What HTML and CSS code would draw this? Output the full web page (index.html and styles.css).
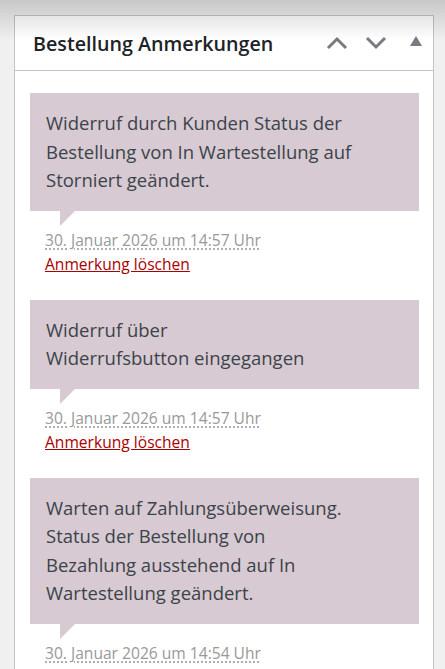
FILE: index.html
```html
<!DOCTYPE html>
<html lang="de">
<head>
    <meta charset="UTF-8">
    <meta name="viewport" content="width=device-width, initial-scale=1.0">
    <title>Bestellung Anmerkungen</title>
    <link rel="stylesheet" href="styles.css">
</head>
<body>
    <div class="top-shadow"></div>

    <div class="postbox">
        <div class="postbox-header">
            <h2>Bestellung Anmerkungen</h2>
            <div class="handle-actions">
                <button class="handle-btn" aria-label="Nach oben">
                    <svg width="22" height="14" viewBox="0 0 22 14"><polyline points="2,12 11,3 20,12" fill="none" stroke="#787c82" stroke-width="3"/></svg>
                </button>
                <button class="handle-btn" aria-label="Nach unten">
                    <svg width="22" height="14" viewBox="0 0 22 14"><polyline points="2,2 11,11 20,2" fill="none" stroke="#787c82" stroke-width="3"/></svg>
                </button>
                <button class="handle-btn toggle" aria-label="Umschalten">
                    <svg width="12" height="10" viewBox="0 0 12 10"><polygon points="0,10 6,0 12,10" fill="#787c82"/></svg>
                </button>
            </div>
        </div>

        <div class="inside">
            <ul class="order-notes">
                <li class="note">
                    <div class="note-content">
                        <p>Widerruf durch Kunden Status der Bestellung von In Wartestellung auf Storniert geändert.</p>
                    </div>
                    <p class="meta">
                        <abbr class="exact-date" title="30.01.2026 14:57">30. Januar 2026 um 14:57 Uhr</abbr><br>
                        <a href="#" class="delete-note">Anmerkung löschen</a>
                    </p>
                </li>
                <li class="note">
                    <div class="note-content">
                        <p>Widerruf über<br>Widerrufsbutton eingegangen</p>
                    </div>
                    <p class="meta">
                        <abbr class="exact-date" title="30.01.2026 14:57">30. Januar 2026 um 14:57 Uhr</abbr><br>
                        <a href="#" class="delete-note">Anmerkung löschen</a>
                    </p>
                </li>
                <li class="note">
                    <div class="note-content">
                        <p>Warten auf Zahlungsüberweisung.<br>Status der Bestellung von Bezahlung ausstehend auf In Wartestellung geändert.</p>
                    </div>
                    <p class="meta">
                        <abbr class="exact-date" title="30.01.2026 14:54">30. Januar 2026 um 14:54 Uhr</abbr><br>
                        <a href="#" class="delete-note">Anmerkung löschen</a>
                    </p>
                </li>
            </ul>
        </div>
    </div>
</body>
</html>
```

FILE: styles.css
```css
body {
    margin: 0;
    font-family: "Open Sans", "Noto Sans", sans-serif;
    background-color: #f0f0f1;
    color: #3c434a;
}
.top-shadow {
    position: fixed;
    top: 0;
    left: 0;
    right: 0;
    height: 40px;
    background: linear-gradient(to bottom, rgba(0,0,0,0.17), rgba(0,0,0,0));
    pointer-events: none;
    z-index: 5;
}
.postbox {
    margin: 15px 11px 0 14px;
    background-color: #fff;
    border: 1px solid #c3c4c7;
    border-bottom: none;
}
.postbox-header {
    display: flex;
    align-items: center;
    justify-content: space-between;
    height: 54px;
    border-bottom: 1px solid #c3c4c7;
}
.postbox-header h2 {
    margin: 0;
    padding-left: 18px;
    font-size: 19.7px;
    font-weight: 600;
    color: #1d2327;
}
.handle-actions {
    display: flex;
    align-items: center;
    padding-right: 9px;
}
.handle-btn {
    background: none;
    border: none;
    padding: 0;
    width: 39px;
    height: 30px;
    display: flex;
    align-items: center;
    justify-content: center;
}
.handle-btn.toggle {
    width: 17px;
    margin-left: 12px;
    padding-bottom: 4px;
}
.inside {
    padding: 22px 14px 0 15px;
}
.order-notes {
    list-style: none;
    margin: 0;
    padding: 0;
}
.note {
    margin-bottom: 24px;
}
.note-content {
    position: relative;
    background-color: #d7cad2;
    padding: 16px;
    font-size: 18.5px;
    line-height: 28.5px;
}
.note-content p {
    margin: 0;
    max-width: 311px;
}
.note-content::after {
    content: "";
    position: absolute;
    left: 30px;
    bottom: -15px;
    border-style: solid;
    border-width: 15px 15px 0 0;
    border-color: #d7cad2 transparent;
}
.meta {
    margin: 0;
    padding: 17px 15px 0;
    font-size: 15.6px;
    line-height: 24px;
    color: #999;
}
.exact-date {
    text-decoration: underline dotted;
    text-underline-offset: 3px;
}
.delete-note {
    color: #a00;
}
```
